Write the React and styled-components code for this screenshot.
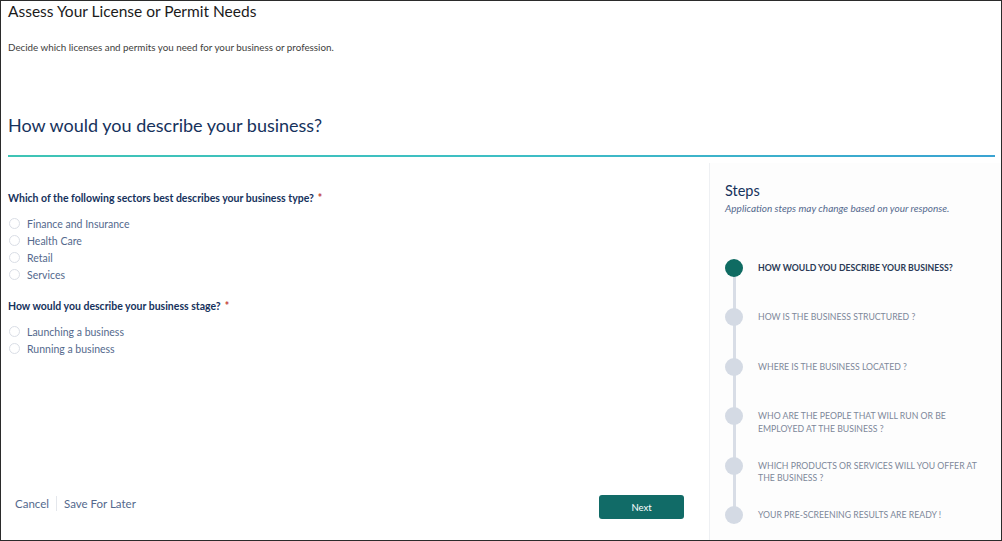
import styled, { createGlobalStyle } from "styled-components";

const GlobalStyle = createGlobalStyle`
	* { box-sizing: border-box; }
	body {
		margin: 0;
		font-family: Lato, "Open Sans", "Liberation Sans", sans-serif;
		background: #fff;
	}
`;

const Page = styled.div`
	width: 1002px;
	height: 541px;
	border: 1px solid #2b2b2b;
	display: flex;
	flex-direction: column;
	overflow: hidden;
`;

const Header = styled.header`
	padding: 0 6px 0 7px;
`;

const Title = styled.h1`
	margin: 0;
	font-size: 15.5px;
	line-height: 20px;
	font-weight: 400;
	color: #1b1b1b;
`;

const Intro = styled.p`
	margin: 19px 0 0;
	font-size: 9.8px;
	line-height: 14px;
	color: #3e3e3c;
`;

const Heading = styled.h2`
	margin: 59px 0 0;
	font-size: 18px;
	line-height: 24px;
	font-weight: 400;
	color: #16325c;
`;

const Divider = styled.div`
	margin-top: 18px;
	height: 2px;
	background: linear-gradient(90deg, #3fc4b5 0%, #3ebfc4 50%, #3aa3d2 100%);
`;

const Body = styled.div`
	flex: 1;
	display: grid;
	grid-template-columns: 1fr 292px;
	min-height: 0;
`;

const Main = styled.main`
	display: flex;
	flex-direction: column;
	padding: 34px 16px 21px 7px;
`;

const Question = styled.fieldset`
	border: 0;
	margin: 0 0 16px;
	padding: 0;
`;

const Label = styled.legend`
	padding: 0;
	margin-bottom: 10px;
	font-size: 10.5px;
	line-height: 14px;
	font-weight: 700;
	color: #16325c;

	span {
		color: #c23934;
		margin-left: 4px;
	}
`;

const Option = styled.label`
	display: flex;
	align-items: center;
	gap: 7px;
	height: 17px;
	font-size: 10.5px;
	color: #54698d;
`;

const Radio = styled.span`
	width: 11px;
	height: 11px;
	border-radius: 50%;
	border: 1px solid #dadee6;
	background: #fff;
	margin-left: 1px;
`;

const Footer = styled.footer`
	margin-top: auto;
	display: flex;
	align-items: flex-start;
	justify-content: space-between;
	padding-left: 7px;
	padding-right: 9px;
`;

const Links = styled.div`
	display: flex;
	align-items: center;
	margin-top: 1px;
`;

const TextButton = styled.button`
	border: 0;
	background: none;
	padding: 0 7px 0 0;
	font: inherit;
	font-size: 11.5px;
	line-height: 15px;
	color: #54698d;
	cursor: pointer;

	& + & {
		border-left: 1px solid #e4e7ec;
		padding-left: 7px;
	}
`;

const NextButton = styled.button`
	width: 85px;
	height: 24px;
	border: 0;
	border-radius: 3px;
	background: #116b67;
	color: #fff;
	font: inherit;
	font-size: 9.5px;
	cursor: pointer;
`;

const Aside = styled.aside`
	margin-top: 6px;
	border-left: 1px solid #eef0f3;
	background: #fdfdfd;
	padding: 19px 10px 0 15px;
`;

const StepsTitle = styled.h3`
	margin: 0;
	font-size: 14.5px;
	line-height: 18px;
	font-weight: 400;
	color: #16325c;
`;

const StepsNote = styled.p`
	margin: 2px 0 0;
	font-size: 10px;
	font-style: italic;
	color: #54698d;
`;

const StepList = styled.ol`
	position: relative;
	list-style: none;
	margin: 45px 0 0;
	padding: 0;

	&::before {
		content: "";
		position: absolute;
		left: 8px;
		top: 10px;
		bottom: 10px;
		width: 3px;
		background: #d8dde6;
	}
`;

const Step = styled.li`
	position: relative;
	display: flex;
	align-items: flex-start;
	gap: 15px;
	height: 49.4px;

	&:last-child {
		height: auto;
	}
`;

const Dot = styled.span`
	flex: none;
	width: 18px;
	height: 18px;
	border-radius: 50%;
	background: ${(p) => (p.$active ? "#0f6b62" : "#d4dae4")};
`;

const StepText = styled.span`
	padding-top: 3px;
	font-size: 8.7px;
	line-height: 12.5px;
	text-transform: uppercase;
	font-weight: ${(p) => (p.$active ? 700 : 400)};
	color: ${(p) => (p.$active ? "#2a3a55" : "#7d889a")};
	max-width: 224px;
`;

const sectors = ["Finance and Insurance", "Health Care", "Retail", "Services"];
const stages = ["Launching a business", "Running a business"];
const steps = [
	"How would you describe your business?",
	"How is the business structured ?",
	"Where is the business located ?",
	"Who are the people that will run or be employed at the business ?",
	"Which products or services will you offer at the business ?",
	"Your pre-screening results are ready !",
];

const App = () => (
	<>
		<GlobalStyle />
		<Page>
			<Header>
				<Title>Assess Your License or Permit Needs</Title>
				<Intro>Decide which licenses and permits you need for your business or profession.</Intro>
				<Heading>How would you describe your business?</Heading>
				<Divider />
			</Header>
			<Body>
				<Main>
					<Question>
						<Label>
							Which of the following sectors best describes your business type?<span>*</span>
						</Label>
						{sectors.map((s) => (
							<Option key={s}>
								<Radio />
								{s}
							</Option>
						))}
					</Question>
					<Question>
						<Label>
							How would you describe your business stage?<span>*</span>
						</Label>
						{stages.map((s) => (
							<Option key={s}>
								<Radio />
								{s}
							</Option>
						))}
					</Question>
					<Footer>
						<Links>
							<TextButton>Cancel</TextButton>
							<TextButton>Save For Later</TextButton>
						</Links>
						<NextButton>Next</NextButton>
					</Footer>
				</Main>
				<Aside>
					<StepsTitle>Steps</StepsTitle>
					<StepsNote>Application steps may change based on your response.</StepsNote>
					<StepList>
						{steps.map((s, i) => (
							<Step key={s}>
								<Dot $active={i === 0} />
								<StepText $active={i === 0}>{s}</StepText>
							</Step>
						))}
					</StepList>
				</Aside>
			</Body>
		</Page>
	</>
);

export default App;
